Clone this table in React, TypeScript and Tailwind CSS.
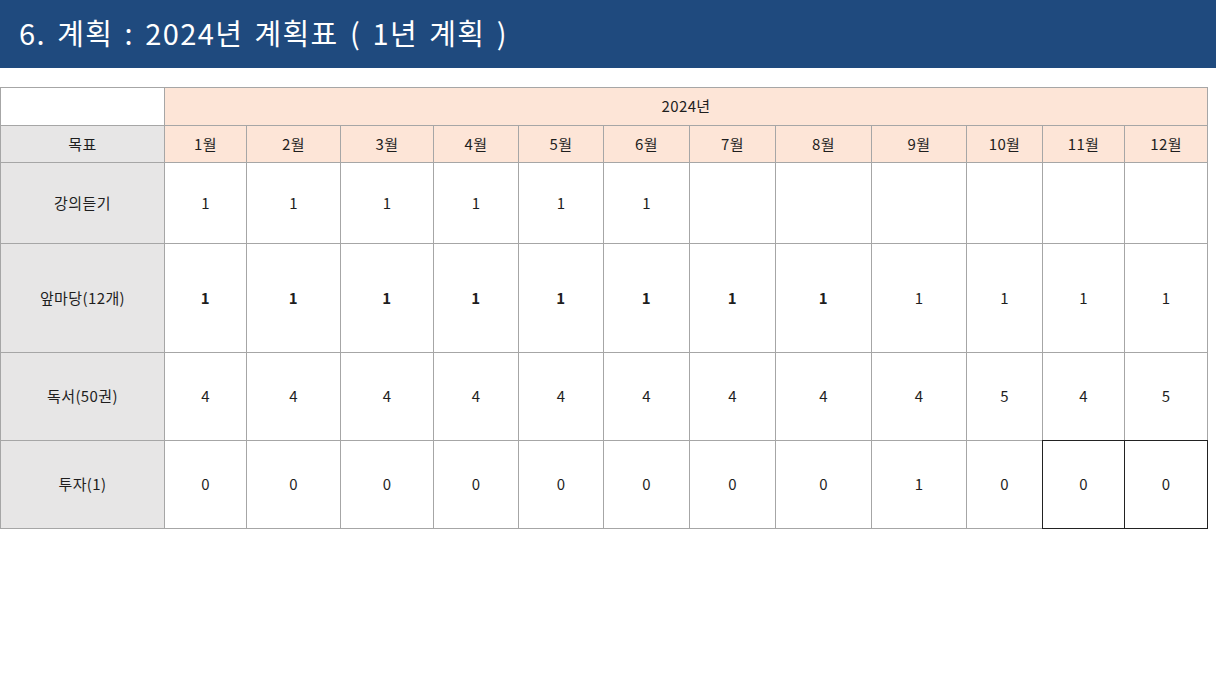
const months = ['1월', '2월', '3월', '4월', '5월', '6월', '7월', '8월', '9월', '10월', '11월', '12월'];
const colWidths = [164, 82, 94, 93, 85, 85, 86, 86, 96, 95, 76, 82, 83];

interface PlanRow {
  goal: string;
  height: number;
  values: string[];
  boldUntil?: number;
}

const rows: PlanRow[] = [
  { goal: '강의듣기', height: 81, values: ['1', '1', '1', '1', '1', '1', '', '', '', '', '', ''] },
  { goal: '앞마당(12개)', height: 109, values: ['1', '1', '1', '1', '1', '1', '1', '1', '1', '1', '1', '1'], boldUntil: 8 },
  { goal: '독서(50권)', height: 88, values: ['4', '4', '4', '4', '4', '4', '4', '4', '4', '5', '4', '5'] },
  { goal: '투자(1)', height: 88, values: ['0', '0', '0', '0', '0', '0', '0', '0', '1', '0', '0', '0'] },
];

export default function App() {
  return (
    <div className="w-[1216px] h-[684px] bg-white overflow-hidden" style={{ fontFamily: '"Noto Sans CJK KR", "Noto Sans", sans-serif' }}>
      <div className="h-[68px] bg-[#1f4a7e] flex items-center pl-[19px] pb-[4px]">
        <h1 className="text-white text-[29px] leading-none tracking-[1.35px] [word-spacing:3.5px]">
          6. 계획 : 2024년 계획표 ( 1년 계획 )
        </h1>
      </div>

      <table className="mt-[19px] table-fixed border-collapse text-[15px] tracking-[0.4px] text-[#1e1e1e]" style={{ width: 1207 }}>
        <colgroup>
          {colWidths.map((w, i) => (
            <col key={i} style={{ width: w }} />
          ))}
        </colgroup>
        <tbody>
          <tr className="h-[38px]">
            <td className="border border-[#a6a6a6] bg-white"></td>
            <td colSpan={12} className="border border-[#a6a6a6] bg-[#fde5d7] text-center">2024년</td>
          </tr>
          <tr className="h-[37px]">
            <td className="border border-[#a6a6a6] bg-[#e7e6e6] text-center">목표</td>
            {months.map((m) => (
              <td key={m} className="border border-[#a6a6a6] bg-[#fde5d7] text-center">{m}</td>
            ))}
          </tr>
          {rows.map((row, ri) => (
            <tr key={row.goal} style={{ height: row.height }}>
              <td className="border border-[#a6a6a6] bg-[#e7e6e6] text-center">{row.goal}</td>
              {row.values.map((v, i) => {
                const selected = ri === rows.length - 1 && i >= 10;
                return (
                  <td
                    key={i}
                    className={`relative border border-[#a6a6a6] text-center ${
                      row.boldUntil && i < row.boldUntil ? 'font-bold' : ''
                    }`}
                  >
                    {v}
                    {selected && <span className="pointer-events-none absolute -inset-px border border-[#222]" />}
                  </td>
                );
              })}
            </tr>
          ))}
        </tbody>
      </table>
    </div>
  );
}
